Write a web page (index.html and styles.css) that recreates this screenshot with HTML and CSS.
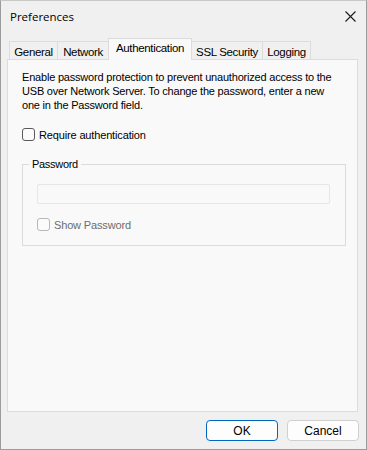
FILE: index.html
```html
<!DOCTYPE html>
<html>
<head>
<meta charset="utf-8">
<link rel="stylesheet" href="styles.css">
</head>
<body>
<div class="window">
  <div class="titlebar">
    <span class="title">Preferences</span>
    <svg class="close" width="11" height="11" viewBox="0 0 11 11"><path d="M0.5 0.5 L10.5 10.5 M10.5 0.5 L0.5 10.5" stroke="#1a1a1a" stroke-width="1.1" fill="none"/></svg>
  </div>
  <div class="tabs">
    <div class="tab t-general">General</div>
    <div class="tab t-network">Network</div>
    <div class="tab t-auth active">Authentication</div>
    <div class="tab t-ssl">SSL Security</div>
    <div class="tab t-logging">Logging</div>
  </div>
  <div class="panel">
    <p class="desc">Enable password protection to prevent unauthorized access to the USB over Network Server. To change the password, enter a new one in the Password field.</p>
    <label class="check">
      <span class="box"></span>
      <span>Require authentication</span>
    </label>
    <div class="group">
      <div class="legend">Password</div>
      <div class="field"></div>
      <label class="check disabled">
        <span class="box"></span>
        <span>Show Password</span>
      </label>
    </div>
  </div>
  <div class="buttons">
    <div class="btn primary">OK</div>
    <div class="btn">Cancel</div>
  </div>
</div>
</body>
</html>
```
FILE: styles.css
```css
* { box-sizing: border-box; }
html, body { margin: 0; padding: 0; background: #f0f0f0; }
body { font-family: "Liberation Sans", Arial, sans-serif; font-size: 11px; color: #000; }
.window {
  width: 367px; height: 450px;
  border: 1px solid #9c9c9c;
  border-top-color: #c8c8c8;
  background: #f0f0f0;
  display: flex; flex-direction: column;
}
.titlebar {
  height: 31px;
  display: flex; align-items: center; justify-content: space-between;
  padding: 0 9px 0 9px;
}
.title { font-family: "Open Sans", "Noto Sans", sans-serif; font-size: 11.5px; color: #000; }
.close { margin-right: 1px; }
.tabs {
  display: flex; align-items: flex-end;
  margin-top: 6px;
  padding-left: 8px;
  height: 21px;
  position: relative; z-index: 1;
}
.tab {
  height: 18px;
  border: 1px solid #dcdcdc;
  border-bottom: none;
  margin-left: -1px;
  background: #f0f0f0;
  display: flex; align-items: center; justify-content: center;
  padding-top: 2px;
  font-size: 11.5px;
  letter-spacing: -0.35px;
}
.t-general { width: 49px; margin-left: 0; }
.t-network { width: 52px; }
.t-auth { width: 84px; }
.t-ssl { width: 72px; }
.t-logging { width: 49px; }
.tab.active {
  height: 22px;
  background: #f9f9f9;
  margin-bottom: -1px;
  padding-top: 0;
  padding-bottom: 3px;
}
.panel {
  margin: 0 8px 0 6px;
  height: 353px;
  border: 1px solid #dcdcdc;
  background: #f9f9f9;
  padding: 10px 13px 0 14px;
}
.desc {
  margin: 0;
  line-height: 14px;
  letter-spacing: -0.2px;
  font-size: 11px;
}
.check {
  display: flex; align-items: center; gap: 4px;
  font-size: 11px; letter-spacing: -0.15px;
}
.panel > .check { margin-top: 16px; }
.box {
  width: 13px; height: 13px;
  border: 1px solid #5a5a5a;
  border-radius: 3px;
  background: #fbfbfb;
}
.group {
  margin-top: 23px;
  width: 324px; height: 82px;
  border: 1px solid #dcdcdc;
  padding: 19px 15px 0 14px;
  position: relative;
}
.legend {
  position: absolute; left: 6px; top: -8px;
  background: #f9f9f9;
  padding: 0 3px;
  font-size: 11px; letter-spacing: -0.3px;
  line-height: 14px;
}
.field {
  height: 20px;
  border: 1px solid #e6e6e6;
  background: #f9f9f9;
  border-radius: 2px;
}
.group .check { margin-top: 14px; }
.check.disabled { color: #6d6d6d; }
.check.disabled .box { border-color: #b8b8b8; }
.buttons {
  display: flex; justify-content: flex-end; gap: 9px;
  padding: 8px 7px 0 0;
}
.btn {
  width: 72px; height: 21px;
  border: 1px solid #d0d0d0;
  border-radius: 4px;
  background: #fdfdfd;
  display: flex; align-items: center; justify-content: center;
  font-size: 12px;
}
.btn.primary { border-color: #0067c0; }
```
